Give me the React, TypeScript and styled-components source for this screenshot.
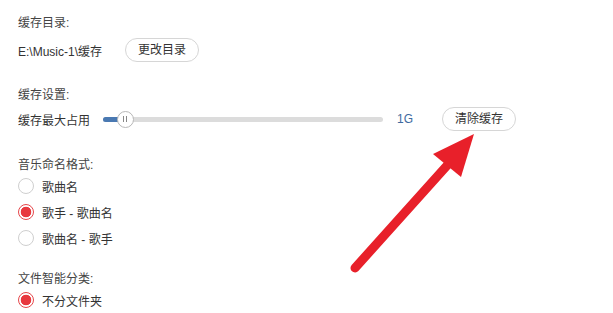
import React from "react";
import styled, { createGlobalStyle } from "styled-components";

const Global = createGlobalStyle`
  html, body { margin: 0; padding: 0; background: #fff; }
  body { font-family: "Liberation Sans", "Noto Sans CJK SC", sans-serif; font-size: 12px; color: #333; }
`;

const Page = styled.div`
  position: relative;
  width: 613px;
  height: 313px;
  overflow: hidden;
  box-sizing: border-box;
  padding: 13px 0 0 18px;
  display: flex;
  flex-direction: column;
`;

const Section = styled.section<{ $gap: number; $after: number }>`
  display: flex;
  flex-direction: column;
  gap: ${(p) => p.$gap}px;
  margin-bottom: ${(p) => p.$after}px;
`;

const Label = styled.div`
  height: 20px;
  line-height: 20px;
  color: #444;
`;

const Row = styled.div`
  display: flex;
  align-items: center;
  height: 24px;
`;

const Text = styled.span<{ $w?: number }>`
  color: #333;
  ${(p) => (p.$w ? `width: ${p.$w}px;` : "")}
  white-space: nowrap;
`;

const PillButton = styled.button<{ $ml: number }>`
  margin-left: ${(p) => p.$ml}px;
  width: 74px;
  height: 24px;
  border: 1px solid #d6d6d6;
  border-radius: 12px;
  background: #fff;
  font: inherit;
  color: #333;
  padding: 0;
  line-height: 22px;
`;

const Track = styled.div`
  position: relative;
  margin-left: 13px;
  width: 280px;
  height: 5px;
  border-radius: 3px;
  background: #dcdcdc;
`;

const Fill = styled.div`
  position: absolute;
  left: 0;
  top: 0;
  bottom: 0;
  border-radius: 3px 0 0 3px;
  background: #4a79b2;
`;

const Knob = styled.div`
  position: absolute;
  top: 50%;
  width: 15px;
  height: 15px;
  margin: -8.5px 0 0 -8.5px;
  border-radius: 50%;
  background: #fff;
  border: 1px solid #b8b8b8;
  display: flex;
  align-items: center;
  justify-content: center;
  gap: 2px;
  &::before, &::after {
    content: "";
    width: 1px;
    height: 6px;
    background: #888;
  }
`;

const Value = styled.span`
  margin-left: 14px;
  color: #3e6aa0;
  font-size: 12px;
`;

const RadioList = styled.div`
  display: flex;
  flex-direction: column;
  gap: 6px;
`;

const RadioRow = styled.label`
  display: flex;
  align-items: center;
  height: 20px;
  gap: 8px;
  margin-left: 0;
`;

const RadioDot = styled.span<{ $on?: boolean }>`
  box-sizing: border-box;
  width: 16px;
  height: 16px;
  border-radius: 50%;
  border: 1px solid ${(p) => (p.$on ? "#e6474b" : "#cfcfcf")};
  background: ${(p) => (p.$on ? "radial-gradient(circle, #e8393f 0 5px, #fff 5.6px)" : "#fff")};
`;

const Arrow = styled.svg`
  position: absolute;
  left: 0;
  top: 0;
  pointer-events: none;
`;

function Radio({ on, label }: { on?: boolean; label: string }) {
  return (
    <RadioRow>
      <RadioDot $on={on} />
      <Text>{label}</Text>
    </RadioRow>
  );
}

export default function App() {
  const pct = 22 / 280;
  return (
    <>
      <Global />
      <Page>
        <Section $gap={5} $after={23}>
          <Label>缓存目录:</Label>
          <Row>
            <Text $w={84}>E:\Music-1\缓存</Text>
            <PillButton $ml={23}>更改目录</PillButton>
          </Row>
        </Section>
        <Section $gap={2} $after={24}>
          <Label>缓存设置:</Label>
          <Row>
            <Text $w={72}>缓存最大占用</Text>
            <Track>
              <Fill style={{ width: `${pct * 100}%` }} />
              <Knob style={{ left: `${pct * 100}%` }} />
            </Track>
            <Value>1G</Value>
            <PillButton $ml={29}>清除缓存</PillButton>
          </Row>
        </Section>
        <Section $gap={1} $after={21}>
          <Label>音乐命名格式:</Label>
          <RadioList>
            <Radio label="歌曲名" />
            <Radio on label="歌手 - 歌曲名" />
            <Radio label="歌曲名 - 歌手" />
          </RadioList>
        </Section>
        <Section $gap={1} $after={0}>
          <Label>文件智能分类:</Label>
          <RadioList>
            <Radio on label="不分文件夹" />
          </RadioList>
        </Section>
        <Arrow width="613" height="313" viewBox="0 0 613 313">
          <line x1="355" y1="268" x2="452" y2="160" stroke="#e8202a" strokeWidth="9" strokeLinecap="round" />
          <polygon points="474,134 433,154 461,177" fill="#e8202a" />
        </Arrow>
      </Page>
    </>
  );
}
